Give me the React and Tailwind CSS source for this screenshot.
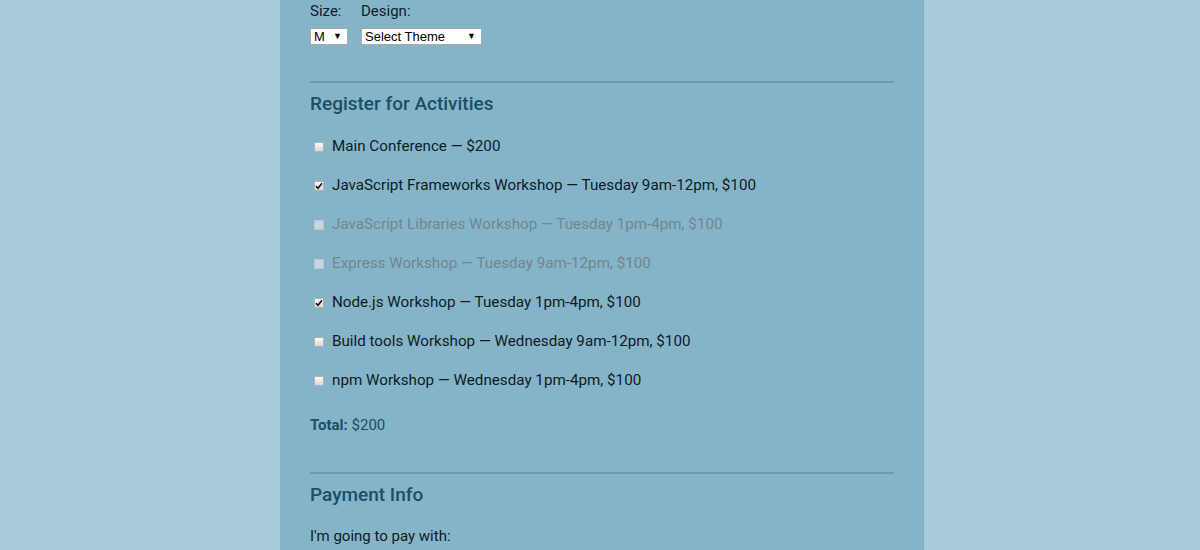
const activities = [
  { label: 'Main Conference — $200', checked: false, disabled: false },
  { label: 'JavaScript Frameworks Workshop — Tuesday 9am-12pm, $100', checked: true, disabled: false },
  { label: 'JavaScript Libraries Workshop — Tuesday 1pm-4pm, $100', checked: false, disabled: true },
  { label: 'Express Workshop — Tuesday 9am-12pm, $100', checked: false, disabled: true },
  { label: 'Node.js Workshop — Tuesday 1pm-4pm, $100', checked: true, disabled: false },
  { label: 'Build tools Workshop — Wednesday 9am-12pm, $100', checked: false, disabled: false },
  { label: 'npm Workshop — Wednesday 1pm-4pm, $100', checked: false, disabled: false },
];

function Box({ checked, disabled }) {
  return (
    <span
      className={
        disabled
          ? 'w-[10px] h-[10px] border border-[#b4c9d3] bg-[#c6d7df] flex items-center justify-center'
          : 'w-[10px] h-[10px] border border-[#a9b4ba] bg-gradient-to-b from-[#fafafa] to-[#d8d8d8] flex items-center justify-center'
      }
    >
      {checked && (
        <svg width="8" height="8" viewBox="0 0 8 8">
          <path d="M1 4.2 L3 6.3 L7 1.2" fill="none" stroke="#111" strokeWidth="1.6" />
        </svg>
      )}
    </span>
  );
}

function Select({ value, width }) {
  return (
    <div
      className={`${width} h-[17px] bg-white border border-[#a9a9a9] flex items-center justify-between pl-[3px] pr-[5px] text-[13px] text-black font-['Liberation_Sans',Arial,sans-serif]`}
    >
      <span>{value}</span>
      <span className="text-[9px]">▼</span>
    </div>
  );
}

export default function App() {
  return (
    <div className="min-h-screen w-full bg-[#a9cad8] flex font-['Roboto',sans-serif]">
      <div className="ml-[280px] w-[644px] h-[550px] bg-[#85b4c9] px-[30px] flex flex-col overflow-hidden border-r border-[#7eaec3]">
        <div className="flex gap-[18px] text-[15px] leading-[22px] text-[#10202a]">
          <div className="w-[33px]">Size:</div>
          <div>Design:</div>
        </div>
        <div className="flex gap-[13px] mt-[6px]">
          <Select value="M" width="w-[38px]" />
          <Select value="Select Theme" width="w-[121px]" />
        </div>

        <div className="mt-[36px] h-[2px] w-[584px] bg-[#6a9ab0]" />
        <h2 className="mt-[9px] text-[19px] leading-[24px] font-medium text-[#1c4e66]">Register for Activities</h2>

        <div className="mt-[11px] flex flex-col">
          {activities.map((a) => (
            <div key={a.label} className="h-[39px] flex items-center gap-[8px] pl-[4px]">
              <Box checked={a.checked} disabled={a.disabled} />
              <span
                className={
                  a.disabled
                    ? 'text-[15.2px] text-[#72868f]'
                    : 'text-[15.2px] text-[#0e1c25]'
                }
              >
                {a.label}
              </span>
            </div>
          ))}
        </div>

        <div className="mt-[14px] text-[15px] leading-[22px] text-[#1c4e66]">
          <span className="font-bold">Total:</span> $200
        </div>

        <div className="mt-[36px] h-[2px] w-[584px] bg-[#6a9ab0]" />
        <h2 className="mt-[9px] text-[19px] leading-[24px] font-medium text-[#1c4e66]">Payment Info</h2>
        <div className="mt-[18px] text-[15px] leading-[22px] text-[#0e1c25]">I'm going to pay with:</div>
      </div>
    </div>
  );
}
